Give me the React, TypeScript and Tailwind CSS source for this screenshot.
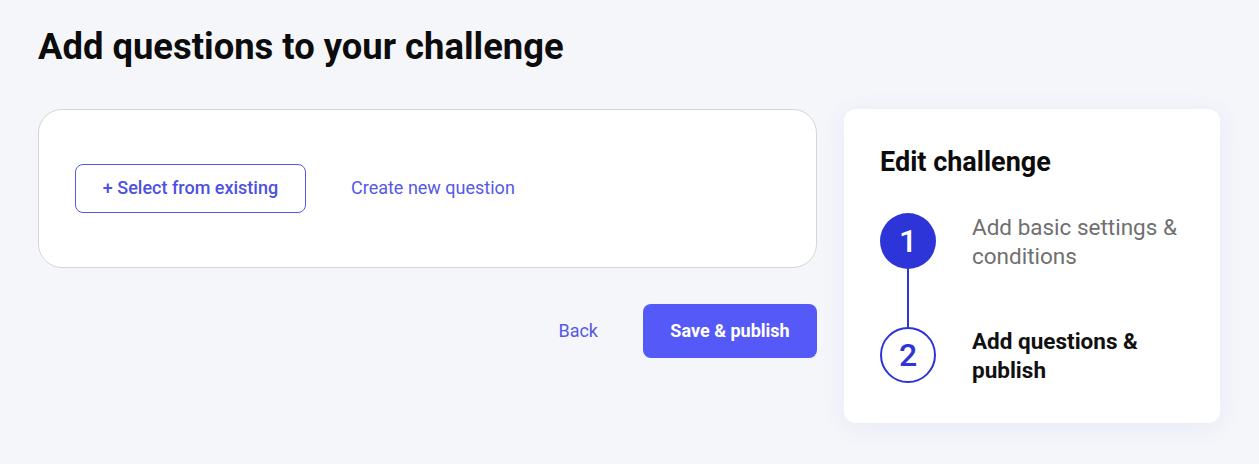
import React from 'react';

const font = { fontFamily: 'Roboto, "Noto Sans", sans-serif' };

const Steps: React.FC = () => {
  return (
    <div className="flex flex-col">
      {/* Step 1 */}
      <div className="flex gap-9">
        <div className="flex flex-col items-center w-14 shrink-0">
          <div className="w-14 h-14 rounded-full bg-[#2d35d8] text-white flex items-center justify-center text-[32px] font-medium">
            1
          </div>
          <div className="w-[2px] h-[58px] bg-[#2d35d8]"></div>
        </div>
        <div className="text-[22.5px] leading-[29px] text-[#6f6f6f] pr-4">
          Add basic settings &amp; conditions
        </div>
      </div>

      {/* Step 2 */}
      <div className="flex gap-9">
        <div className="w-14 h-14 shrink-0 rounded-full border-2 border-[#2d35d8] text-[#2d35d8] flex items-center justify-center text-[32px] font-medium">
          2
        </div>
        <div className="text-[22.5px] leading-[29px] font-bold text-[#111111] pr-12">
          Add questions &amp; publish
        </div>
      </div>
    </div>
  );
};

export default function App() {
  return (
    <div className="min-h-screen bg-[#f5f6fa] pl-[38px] pt-[27px]" style={font}>
      <h1 className="text-[36.4px] leading-10 font-bold text-[#0c0c0c]">
        Add questions to your challenge
      </h1>

      <div className="flex items-start gap-[27px] mt-[42px]">
        {/* Main column */}
        <div className="w-[779px]">
          <div className="h-[159px] bg-white border border-[#d6d6da] rounded-[24px] pl-9 flex items-center gap-[45px]">
            <button className="h-[49px] w-[231px] pb-[2px] border border-[#5559e6] rounded-lg text-[18px] font-medium text-[#4d51e0]">
              + Select from existing
            </button>
            <span className="text-[18px] text-[#5559e6] -mt-[3px]">Create new question</span>
          </div>

          <div className="flex items-center justify-end gap-[45px] mt-9">
            <span className="text-[18px] text-[#5559e6] -mt-[2px]">Back</span>
            <button className="h-[54px] w-[174px] pb-[2px] bg-[#5559f8] rounded-lg text-white text-[18px] font-bold">
              Save &amp; publish
            </button>
          </div>
        </div>

        {/* Sidebar */}
        <div className="w-[376px] bg-white rounded-xl shadow-[0_4px_24px_rgba(80,90,200,0.08)] pl-9 pt-[37px] pb-[38px]">
          <h2 className="text-[27px] leading-8 font-bold text-[#0c0c0c]">Edit challenge</h2>
          <div className="mt-[35px]">
            <Steps />
          </div>
        </div>
      </div>
    </div>
  );
}
